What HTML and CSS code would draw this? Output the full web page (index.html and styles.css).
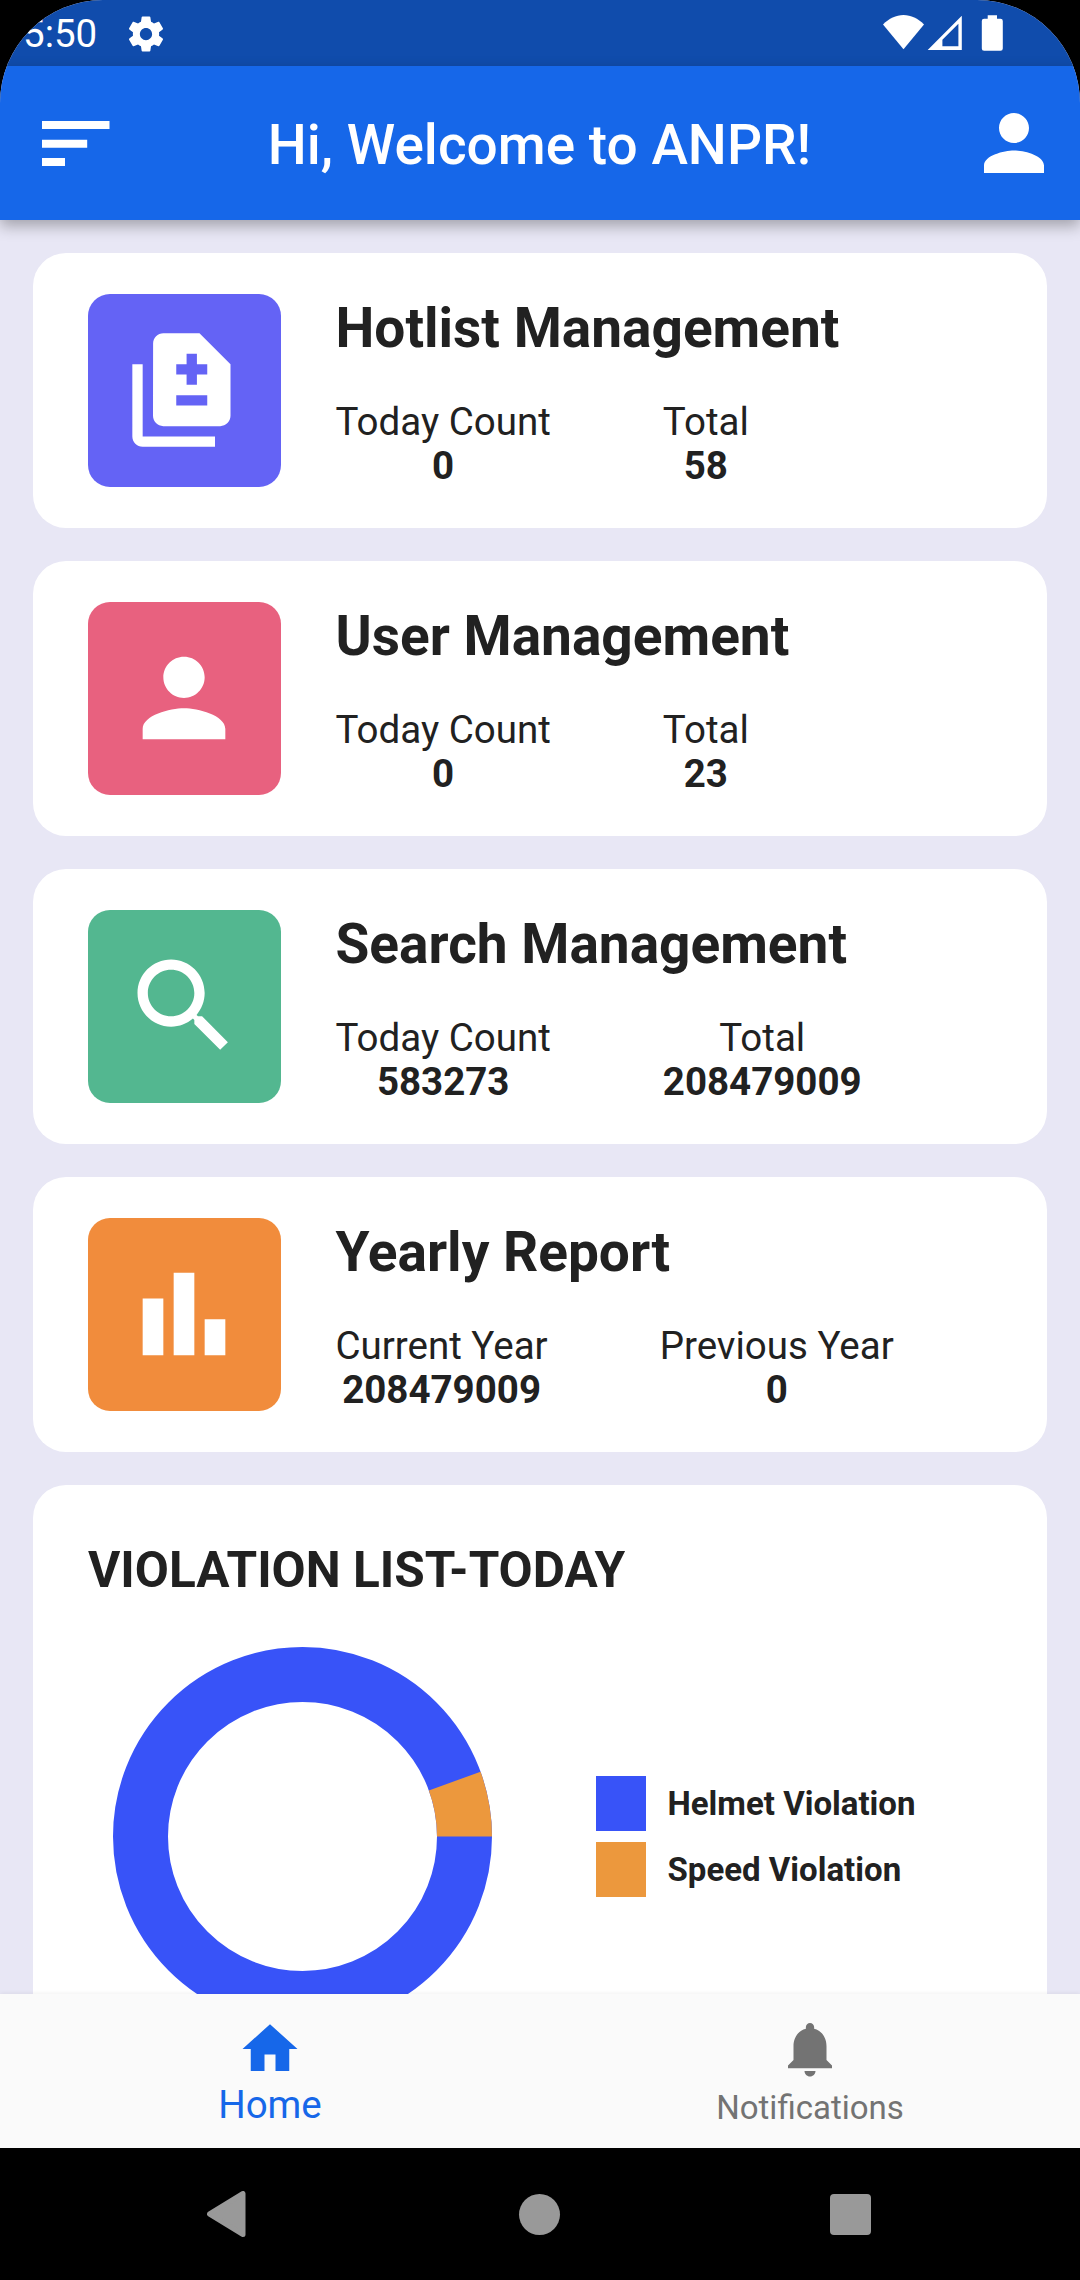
FILE: index.html
```html
<!doctype html>
<html lang="en">
  <head>
    <meta charset="UTF-8" />
    <meta name="viewport" content="width=device-width, initial-scale=1.0" />
    <title>ANPR</title>
    <link rel="stylesheet" href="styles.css">
  </head>
  <body>
    <div class="device">
      <div class="screen">
        <!-- Status bar -->
        <div class="status-bar">
          <div class="status-left">
            <span class="clock">5:50</span>
            <svg class="gear" viewBox="0 0 24 24">
              <path d="M19.43 12.98c.04-.32.07-.64.07-.98s-.03-.66-.07-.98l2.11-1.65c.19-.15.24-.42.12-.64l-2-3.46c-.12-.22-.39-.3-.61-.22l-2.49 1c-.52-.4-1.08-.73-1.69-.98l-.38-2.65C14.46 2.18 14.25 2 14 2h-4c-.25 0-.46.18-.49.42l-.38 2.65c-.61.25-1.17.59-1.69.98l-2.49-1c-.23-.09-.49 0-.61.22l-2 3.46c-.13.22-.07.49.12.64l2.11 1.65c-.04.32-.07.65-.07.98s.03.66.07.98l-2.11 1.65c-.19.15-.24.42-.12.64l2 3.46c.12.22.39.3.61.22l2.49-1c.52.4 1.08.73 1.69.98l.38 2.65c.03.24.24.42.49.42h4c.25 0 .46-.18.49-.42l.38-2.65c.61-.25 1.17-.59 1.69-.98l2.49 1c.23.09.49 0 .61-.22l2-3.46c.12-.22.07-.49-.12-.64l-2.11-1.65zM12 15.5c-1.93 0-3.5-1.57-3.5-3.5s1.57-3.5 3.5-3.5 3.5 1.57 3.5 3.5-1.57 3.5-3.5 3.5z" />
            </svg>
          </div>
          <svg class="status-icons" viewBox="0 0 120 36">
            <path d="M0 9.5C6 3.500 13 0 20.500 0S35 3.500 41 9.500L20.500 34.300z" />
            <path fill-rule="evenodd" d="M44.700 35h34.100V.7zM59.400 31.300v-6.500l16-16v22.500z" />
            <path d="M104.700.3h9.300v3.500h3.500a2.300 2.300 0 0 1 2.300 2.300v27.300a2.300 2.300 0 0 1-2.300 2.300h-16.400a2.300 2.300 0 0 1-2.300-2.300V6.100a2.300 2.300 0 0 1 2.300-2.300h3.600z" />
          </svg>
        </div>

        <!-- App bar -->
        <header class="app-bar">
          <svg class="menu-icon" viewBox="0 0 68 45">
            <path d="M0 0h67.500v8H0zM0 18.700h45.200v8H0zM0 37h23v8H0z" />
          </svg>
          <h1 class="app-title">Hi, Welcome to ANPR!</h1>
          <svg class="profile-icon" viewBox="0 0 24 24">
            <path d="M12 12c2.210 0 4-1.790 4-4s-1.790-4-4-4-4 1.790-4 4 1.790 4 4 4zm0 2c-2.670 0-8 1.340-8 4v2h16v-2c0-2.660-5.330-4-8-4z" />
          </svg>
        </header>

        <main class="content">
          <div class="card">
            <div class="card-icon icon-purple">
              <svg viewBox="0 0 24 24">
                <path d="M18 23H4c-1.100 0-2-.9-2-2V7h2v14h14v2zM15 1H8.010c-1.100 0-1.990.9-1.990 2L6 17c0 1.100.89 2 1.990 2H19c1.100 0 2-.9 2-2V7l-6-6zm1.500 14h-6v-2h6v2zm0-6h-2v2h-2V9h-2V7h2V5h2v2h2v2z" />
              </svg>
            </div>
            <div class="card-info">
              <h2 class="card-title">Hotlist Management</h2>
              <div class="stats">
                <div class="stat">
                  <div class="stat-label">Today Count</div>
                  <div class="stat-value">0</div>
                </div>
                <div class="stat">
                  <div class="stat-label">Total</div>
                  <div class="stat-value">58</div>
                </div>
              </div>
            </div>
          </div>

          <div class="card">
            <div class="card-icon icon-pink">
              <svg viewBox="0 0 24 24">
                <path d="M12 12c2.210 0 4-1.790 4-4s-1.790-4-4-4-4 1.790-4 4 1.790 4 4 4zm0 2c-2.670 0-8 1.340-8 4v2h16v-2c0-2.660-5.330-4-8-4z" />
              </svg>
            </div>
            <div class="card-info">
              <h2 class="card-title">User Management</h2>
              <div class="stats">
                <div class="stat">
                  <div class="stat-label">Today Count</div>
                  <div class="stat-value">0</div>
                </div>
                <div class="stat">
                  <div class="stat-label">Total</div>
                  <div class="stat-value">23</div>
                </div>
              </div>
            </div>
          </div>

          <div class="card">
            <div class="card-icon icon-green">
              <svg viewBox="0 0 24 24">
                <path d="M15.500 14h-.79l-.28-.27C15.410 12.590 16 11.110 16 9.500 16 5.910 13.090 3 9.500 3S3 5.910 3 9.500 5.910 16 9.500 16c1.610 0 3.090-.59 4.230-1.570l.27.28v.79l5 4.990L20.490 19l-4.990-5zm-6 0C7.010 14 5 11.990 5 9.500S7.010 5 9.500 5 14 7.010 14 9.500 11.990 14 9.500 14z" />
              </svg>
            </div>
            <div class="card-info">
              <h2 class="card-title">Search Management</h2>
              <div class="stats">
                <div class="stat">
                  <div class="stat-label">Today Count</div>
                  <div class="stat-value">583273</div>
                </div>
                <div class="stat">
                  <div class="stat-label">Total</div>
                  <div class="stat-value">208479009</div>
                </div>
              </div>
            </div>
          </div>

          <div class="card">
            <div class="card-icon icon-orange">
              <svg viewBox="0 0 24 24">
                <path d="M4 9h4v11H4zM10 4h4v16h-4zM16 13h4v7h-4z" />
              </svg>
            </div>
            <div class="card-info">
              <h2 class="card-title">Yearly Report</h2>
              <div class="stats">
                <div class="stat">
                  <div class="stat-label">Current Year</div>
                  <div class="stat-value">208479009</div>
                </div>
                <div class="stat">
                  <div class="stat-label">Previous Year</div>
                  <div class="stat-value">0</div>
                </div>
              </div>
            </div>
          </div>

          <!-- Violation chart -->
          <div class="card chart-card">
            <h2 class="chart-title">VIOLATION LIST-TODAY</h2>
            <div class="chart-row">
              <svg class="donut" viewBox="0 0 379 379">
                <circle class="donut-helmet" cx="189.5" cy="189.5" r="162" />
                <path class="donut-speed" d="M351.5 189.500A162 162 0 0 0 341.700 134.100" />
              </svg>
              <div class="legend">
                <div class="legend-item">
                  <span class="swatch swatch-helmet"></span>
                  <span>Helmet Violation</span>
                </div>
                <div class="legend-item">
                  <span class="swatch swatch-speed"></span>
                  <span>Speed Violation</span>
                </div>
              </div>
            </div>
          </div>
        </main>

        <!-- Tabs -->
        <nav class="bottom-nav">
          <a class="tab active">
            <svg viewBox="0 0 24 24">
              <path d="M10 20v-6h4v6h5v-8h3L12 3 2 12h3v8z" />
            </svg>
            <span>Home</span>
          </a>
          <a class="tab">
            <svg viewBox="0 0 24 24">
              <path d="M12 22c1.100 0 2-.9 2-2h-4c0 1.100.89 2 2 2zm6-6v-5c0-3.070-1.640-5.640-4.500-6.320V4c0-.83-.67-1.500-1.500-1.500s-1.500.67-1.500 1.500v.68C7.630 5.360 6 7.920 6 11v5l-2 2v1h16v-1l-2-2z" />
            </svg>
            <span>Notifications</span>
          </a>
        </nav>
      </div>

      <!-- System navigation -->
      <div class="system-nav">
        <svg class="sys-back" viewBox="0 0 39 46">
          <path d="M36 2.500v41L2.500 23z" />
        </svg>
        <div class="sys-home"></div>
        <div class="sys-recent"></div>
      </div>
    </div>
  </body>
</html>
```
FILE: styles.css
```css
* {
  margin: 0;
  padding: 0;
  box-sizing: border-box;
}

body {
  font-family: Roboto, 'Liberation Sans', sans-serif;
  background: #000;
  color: #212121;
}

svg {
  display: block;
  flex-shrink: 0;
  fill: currentColor;
}

.device {
  width: 1080px;
  height: 2280px;
  display: flex;
  flex-direction: column;
  overflow: hidden;
  background: #000;
}

.screen {
  height: 2148px;
  display: flex;
  flex-direction: column;
  background: #e8e7f5;
  border-radius: 103px 103px 0 0;
  overflow: hidden;
}

/* Status bar */
.status-bar {
  height: 66px;
  flex-shrink: 0;
  display: flex;
  justify-content: space-between;
  align-items: flex-start;
  padding: 0 77px 0 23px;
  background: #104cac;
  color: white;
}

.status-left {
  display: flex;
  align-items: center;
  gap: 28px;
  height: 67px;
}

.clock {
  font-size: 38.5px;
  line-height: 44px;
  margin-top: 1px;
}

.gear {
  width: 42px;
  height: 42px;
}

.status-icons {
  width: 120px;
  height: 36px;
  margin-top: 15px;
}

/* App bar */
.app-bar {
  height: 154px;
  flex-shrink: 0;
  display: flex;
  align-items: center;
  justify-content: space-between;
  padding: 0 21px 0 42px;
  background: #1667e9;
  color: white;
  box-shadow: 0 6px 14px rgba(0, 0, 0, 0.3);
  z-index: 1;
}

.menu-icon {
  width: 68px;
  height: 45px;
}

.app-title {
  font-size: 55px;
  font-weight: 500;
  line-height: 64px;
  margin-top: 4px;
}

.profile-icon {
  width: 90px;
  height: 90px;
}

/* Cards */
.content {
  flex: 1;
  min-height: 0;
  display: flex;
  flex-direction: column;
  gap: 33px;
  padding: 33px 33px 0;
  overflow: hidden;
}

.card {
  height: 275px;
  flex-shrink: 0;
  display: flex;
  align-items: flex-start;
  gap: 55px;
  padding: 41px 55px;
  background: white;
  border-radius: 33px;
}

.card-icon {
  width: 192.5px;
  height: 192.5px;
  display: flex;
  align-items: center;
  justify-content: center;
  border-radius: 22px;
  color: white;
}

.card-icon svg {
  width: 124px;
  height: 124px;
}

.icon-purple {
  background: #6463f5;
}
.icon-pink {
  background: #e8617f;
}
.icon-green {
  background: #53b790;
}
.icon-orange {
  background: #f18c3c;
}

.card-info {
  padding-top: 2px;
}

.card-title {
  font-size: 55px;
  font-weight: 700;
  line-height: 64px;
  margin-bottom: 40px;
}

.stats {
  display: flex;
  gap: 112px;
}

.stat {
  text-align: center;
  font-size: 38.5px;
  line-height: 44px;
}

.stat-value {
  font-weight: 700;
}

/* Violation chart */
.chart-card {
  height: 620px;
  flex-direction: column;
  gap: 48px;
  padding: 56px 55px;
}

.chart-title {
  font-size: 49.5px;
  font-weight: 700;
  line-height: 58px;
}

.chart-row {
  display: flex;
  align-items: center;
  gap: 104.5px;
  padding-left: 24.5px;
}

.donut {
  width: 379px;
  height: 379px;
  fill: none;
  stroke-width: 55;
}

.donut-helmet {
  stroke: #3853f8;
}
.donut-speed {
  stroke: #ec983d;
}

.legend {
  display: flex;
  flex-direction: column;
  gap: 11px;
}

.legend-item {
  display: flex;
  align-items: center;
  gap: 22px;
  font-size: 33px;
  font-weight: 700;
}

.swatch {
  width: 49.5px;
  height: 55px;
}

.swatch-helmet {
  background: #3853f8;
}
.swatch-speed {
  background: #ec983d;
}

/* Tabs */
.bottom-nav {
  height: 154px;
  flex-shrink: 0;
  display: flex;
  background: #fafafa;
  box-shadow: 0 -1px 4px rgba(0, 0, 0, 0.06);
  z-index: 1;
}

.tab {
  flex: 1;
  display: flex;
  flex-direction: column;
  align-items: center;
  padding-top: 22px;
  color: #737373;
  font-size: 33px;
  line-height: 52px;
}

.tab svg {
  width: 66px;
  height: 66px;
}

.tab.active {
  color: #1667e9;
  font-size: 38.5px;
  line-height: 46px;
}

/* System navigation */
.system-nav {
  height: 132px;
  display: flex;
  align-items: center;
  justify-content: space-between;
  padding: 0 209px 0 207px;
  color: #999;
}

.sys-back {
  width: 39px;
  height: 46px;
  stroke: currentColor;
  stroke-width: 5;
  stroke-linejoin: round;
}

.sys-home {
  width: 41px;
  height: 41px;
  margin-left: 3px;
  border-radius: 50%;
  background: currentColor;
}

.sys-recent {
  width: 41px;
  height: 41px;
  border-radius: 4px;
  background: currentColor;
}
```
